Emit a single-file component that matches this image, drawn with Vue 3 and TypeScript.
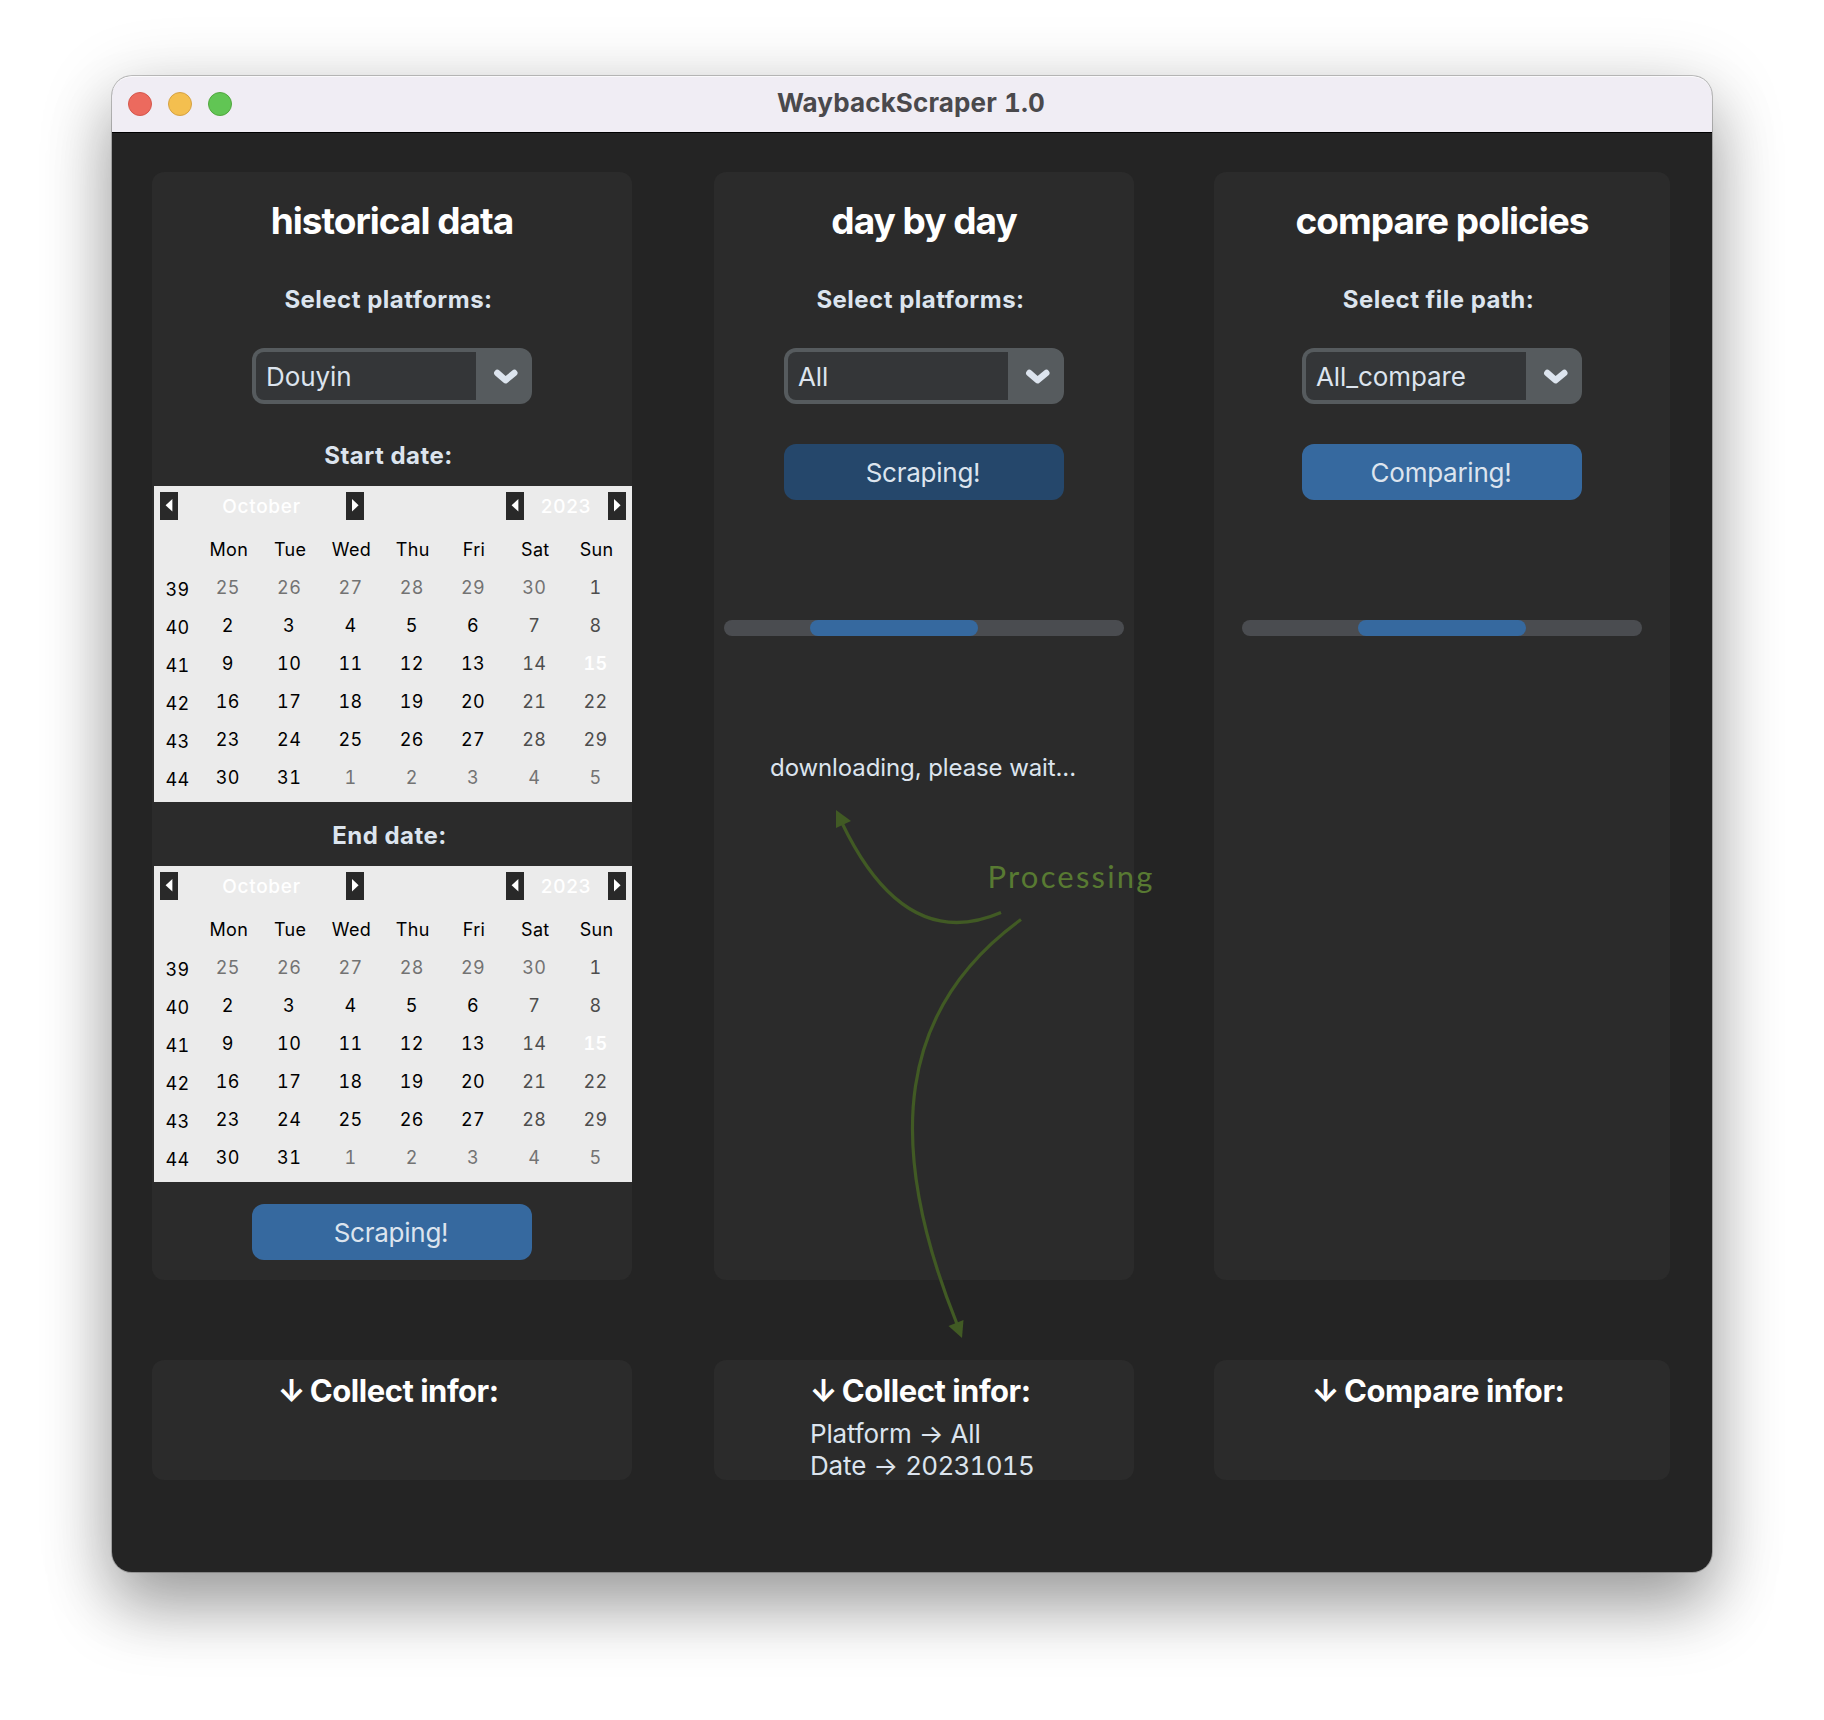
<script setup lang="ts">
interface Day {
  n: number
  kind: 'normal' | 'weekend' | 'other' | 'selected'
}

interface Week {
  no: number
  days: Day[]
}

const weekdays = ['Mon', 'Tue', 'Wed', 'Thu', 'Fri', 'Sat', 'Sun']

const weeks: Week[] = Array.from({ length: 6 }, (_, w) => ({
  no: 39 + w,
  days: Array.from({ length: 7 }, (_, d): Day => {
    const offset = w * 7 + d - 5
    if (offset <= 0) return { n: 30 + offset, kind: 'other' }
    if (offset > 31) return { n: offset - 31, kind: 'other' }
    if (offset === 15) return { n: offset, kind: 'selected' }
    return { n: offset, kind: d > 4 ? 'weekend' : 'normal' }
  }),
}))

const ranges = ['Start date:', 'End date:']
</script>

<template>
  <div class="page">
    <div class="window">
      <header class="titlebar">
        <div class="lights">
          <i class="light red"></i>
          <i class="light yellow"></i>
          <i class="light green"></i>
        </div>
        <span class="app-title">WaybackScraper 1.0</span>
      </header>

      <main class="content">
        <div class="row">
          <section class="panel w1">
            <h2 class="heading">historical data</h2>
            <div class="label first">Select platforms:</div>
            <div class="combo">
              <span class="value">Douyin</span>
              <svg class="chevron" viewBox="0 0 56 56"><path d="M21.3 25 L29.5 32.2 L38.3 25" /></svg>
            </div>
            <template v-for="(range, i) in ranges" :key="range">
              <div class="label" :class="i ? 'end' : 'start'">{{ range }}</div>
              <div class="calendar">
                <div class="cal-head">
                  <span class="nav"><svg viewBox="0 0 18 28"><path d="M12.4 7 V19.6 L5.6 13.3 Z" /></svg></span>
                  <span class="month">October</span>
                  <span class="nav"><svg viewBox="0 0 18 28"><path d="M6 7 V19.6 L12.6 13.3 Z" /></svg></span>
                  <span class="spacer"></span>
                  <span class="nav"><svg viewBox="0 0 18 28"><path d="M12.4 7 V19.6 L5.6 13.3 Z" /></svg></span>
                  <span class="year">2023</span>
                  <span class="nav"><svg viewBox="0 0 18 28"><path d="M6 7 V19.6 L12.6 13.3 Z" /></svg></span>
                </div>
                <div class="grid names">
                  <span></span>
                  <span v-for="name in weekdays" :key="name">{{ name }}</span>
                </div>
                <div v-for="week in weeks" :key="week.no" class="grid">
                  <span class="week-no">{{ week.no }}</span>
                  <span v-for="(day, d) in week.days" :key="d" :class="day.kind">{{ day.n }}</span>
                </div>
              </div>
            </template>
            <button class="btn last">Scraping!</button>
          </section>

          <section class="panel w2">
            <h2 class="heading">day by day</h2>
            <div class="label first">Select platforms:</div>
            <div class="combo">
              <span class="value">All</span>
              <svg class="chevron" viewBox="0 0 56 56"><path d="M21.3 25 L29.5 32.2 L38.3 25" /></svg>
            </div>
            <button class="btn pressed">Scraping!</button>
            <div class="progress"><div class="bar" :style="{ marginLeft: '86px' }"></div></div>
            <div class="status">downloading, please wait...</div>
          </section>

          <section class="panel w3">
            <h2 class="heading">compare policies</h2>
            <div class="label first">Select file path:</div>
            <div class="combo">
              <span class="value">All_compare</span>
              <svg class="chevron" viewBox="0 0 56 56"><path d="M21.3 25 L29.5 32.2 L38.3 25" /></svg>
            </div>
            <button class="btn">Comparing!</button>
            <div class="progress"><div class="bar" :style="{ marginLeft: '116px' }"></div></div>
          </section>
        </div>

        <div class="row info-row">
          <section class="info w1"><h3><span class="arrow">↓</span> Collect infor:</h3></section>
          <section class="info w2">
            <h3><span class="arrow">↓</span> Collect infor:</h3>
            <p>Platform → All<br />Date → <span class="digits">20231015</span></p>
          </section>
          <section class="info w3"><h3><span class="arrow">↓</span> Compare infor:</h3></section>
        </div>
      </main>
    </div>

    <svg class="notes" viewBox="0 0 1824 1720">
      <path class="line" d="M1001 912.5 Q905 954 842 823" />
      <path class="head" d="M836 810 L851 821 L836 828 Z" />
      <path class="line" d="M1021 919.5 C899 1008 883 1140 957 1324" />
      <path class="head" d="M962 1338 L948.5 1326 L963.5 1320 Z" />
    </svg>
    <span class="processing">Processing</span>
  </div>
</template>

<style>
body {
  margin: 0;
  background: #fff;
}
</style>

<style scoped>
.page {
  position: relative;
  box-sizing: border-box;
  width: 1824px;
  height: 1720px;
  padding: 76px 112px 148px;
  overflow: hidden;
  background: #fff;
  font-family: Inter, "Liberation Sans", sans-serif;
  color: #dce4ee;
}

.window {
  width: 1600px;
  height: 1496px;
  border-radius: 20px;
  background: #242424;
  box-shadow: 0 0 0 1px rgba(0, 0, 0, 0.22), 0 38px 64px rgba(0, 0, 0, 0.27), 0 14px 76px rgba(0, 0, 0, 0.2);
}

.titlebar {
  box-sizing: border-box;
  display: grid;
  grid-template-columns: 200px 1fr 200px;
  align-items: center;
  height: 57px;
  border-bottom: 1px solid #000;
  border-radius: 20px 20px 0 0;
  background: #f0edf4;
  box-shadow: inset 0 1px 0 #faf9fb;
}

.lights {
  display: flex;
  gap: 16px;
  padding-left: 16px;
}

.light {
  box-sizing: border-box;
  width: 24px;
  height: 24px;
  border-radius: 50%;
}

.red { background: #ec6a5e; border: 1px solid #d5574c; }
.yellow { background: #f4bf4f; border: 1px solid #d6a243; }
.green { background: #61c554; border: 1px solid #51a73e; }

.app-title {
  margin-top: -2px;
  padding-right: 2px;
  text-align: center;
  font-size: 26px;
  font-weight: 700;
  line-height: 30px;
  letter-spacing: 0.13px;
  font-variant-numeric: tabular-nums;
  color: #4a494c;
}

.content {
  padding: 39px 42px 0 40px;
}

.row {
  display: flex;
  justify-content: space-between;
}

.info-row { margin-top: 80px; }
.w1 { width: 480px; }
.w2 { width: 420px; margin-left: 2px; }
.w3 { width: 456px; }

.panel {
  display: flex;
  flex-direction: column;
  align-items: center;
  height: 1108px;
  border-radius: 12px;
  background: #2b2b2b;
}

.heading {
  height: 40px;
  margin: 28px 0 0;
  font-size: 37px;
  font-weight: 700;
  line-height: 42px;
  letter-spacing: -1px;
  color: #fff;
  white-space: nowrap;
}

.label {
  height: 26px;
  padding-right: 7px;
  font-size: 24px;
  font-weight: 700;
  line-height: 28px;
  letter-spacing: 0.48px;
  white-space: nowrap;
}

.label.first { margin: 46px 0 36px; }
.label.start { margin: 38px 0 18px; }
.label.end { margin: 20px 0 18px; padding-right: 5px; }

.combo {
  box-sizing: border-box;
  display: flex;
  justify-content: space-between;
  width: 280px;
  height: 56px;
  padding: 4px 0 4px 4px;
  border-radius: 12px;
  background: #565b5e;
}

.value {
  box-sizing: border-box;
  width: 220px;
  height: 48px;
  padding-left: 10px;
  border-radius: 8px 0 0 8px;
  background: #343638;
  font-size: 26px;
  line-height: 49px;
  letter-spacing: -0.1px;
}

.chevron {
  width: 56px;
  height: 56px;
  margin-top: -4px;
}

.chevron path {
  fill: none;
  stroke: #dce4ee;
  stroke-width: 6.4;
  stroke-linecap: round;
  stroke-linejoin: round;
}

.btn {
  width: 280px;
  height: 56px;
  margin-top: 40px;
  padding: 2px 2px 0 0;
  border: 0;
  border-radius: 12px;
  background: #36699f;
  font: 400 26px/54px Inter, "Liberation Sans", sans-serif;
  letter-spacing: -0.25px;
  color: #dce4ee;
}

.btn.pressed { background: #25476b; }
.btn.last { margin-top: 22px; }

.progress {
  width: 400px;
  height: 16px;
  margin-top: 120px;
  border-radius: 8px;
  background: #4a4c50;
}

.bar {
  width: 168px;
  height: 16px;
  border-radius: 8px;
  background: #36699f;
}

.status {
  height: 26px;
  margin-top: 118px;
  padding-right: 2px;
  font-size: 24px;
  line-height: 28px;
  letter-spacing: -0.1px;
  white-space: nowrap;
}

.calendar {
  box-sizing: border-box;
  align-self: flex-end;
  width: 478px;
  height: 316px;
  padding: 6px;
  background: #ebebeb;
  color: #000;
}

.cal-head {
  display: flex;
  height: 28px;
  font-size: 19px;
  font-weight: 500;
  line-height: 30px;
  letter-spacing: 0.7px;
  color: #fff;
  text-align: center;
}

.nav {
  width: 18px;
  height: 28px;
  background: #292929;
}

.nav svg { display: block; fill: #fff; }
.month { box-sizing: border-box; width: 168px; padding-right: 1px; }
.spacer { width: 142px; }
.year { width: 84px; }

.grid {
  display: grid;
  grid-template-columns: 37.2px repeat(7, 61.3px);
  height: 38px;
  font-size: 18px;
  line-height: 40px;
  letter-spacing: 0.35px;
  font-variant-numeric: tabular-nums;
  text-align: center;
}

.grid.names {
  margin-top: 10px;
  padding-left: 1px;
}

.week-no { padding: 2px 2px 0 0; }
.weekend { color: #4d4d4d; }
.other { color: #737373; }
.selected { color: #fff; font-weight: 600; }

.info {
  display: flex;
  flex-direction: column;
  align-items: center;
  height: 120px;
  border-radius: 12px;
  background: #2b2b2b;
}

.info h3 {
  flex-shrink: 0;
  height: 30px;
  margin: 16px 0 0;
  padding-right: 8px;
  font-size: 31px;
  font-weight: 700;
  line-height: 30px;
  letter-spacing: -0.48px;
  color: #fff;
  white-space: nowrap;
}

.arrow { margin-right: -2px; }

.info p {
  flex-shrink: 0;
  width: 228px;
  margin: 12px 0 0;
  font-size: 26px;
  line-height: 32px;
  letter-spacing: -0.15px;
  white-space: nowrap;
}

.digits {
  font-variant-numeric: tabular-nums;
  letter-spacing: -0.75px;
}

.notes {
  position: absolute;
  inset: 0;
  width: 1824px;
  height: 1720px;
}

.line { fill: none; stroke: #415a24; stroke-width: 3.2; }
.head { fill: #415a24; }

.processing {
  position: absolute;
  left: 987.5px;
  top: 857px;
  font-family: Lato, sans-serif;
  font-size: 31px;
  line-height: 38px;
  letter-spacing: 2.2px;
  color: #587a32;
}
</style>
